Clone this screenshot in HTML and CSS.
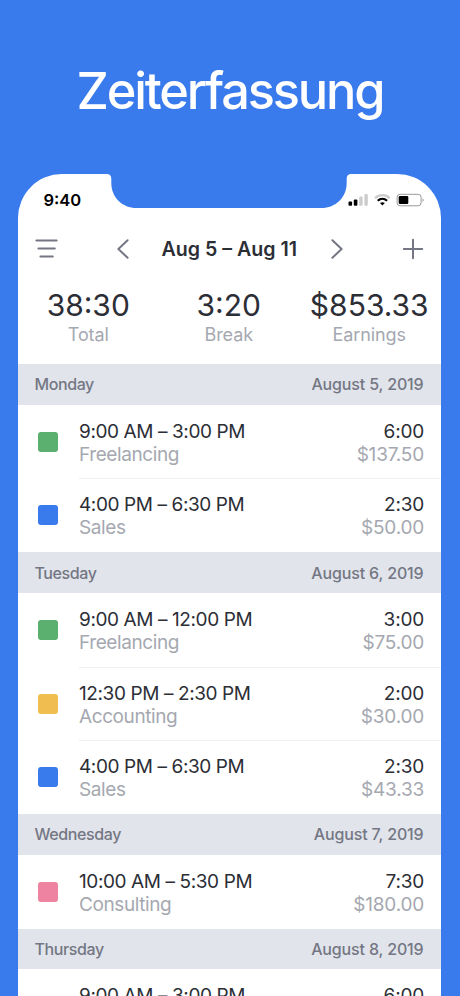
FILE: index.html
```html
<!DOCTYPE html>
<html lang="de">
<head>
  <meta charset="UTF-8">
  <meta name="viewport" content="width=device-width, initial-scale=1.0">
  <title>Zeiterfassung</title>
  <link rel="stylesheet" href="styles.css">
</head>
<body>
  <h1 class="headline">Zeiterfassung</h1>

  <div class="phone">
    <svg class="notch" width="260" height="35" viewBox="0 0 260 35">
      <path d="M7 0C11 0 12.3 1.6 12.3 5V9C12.3 23.5 23.5 34 37.5 34H222.5C236.5 34 247.7 23.5 247.7 9V5C247.7 1.6 249 0 253 0V-2H7Z" />
    </svg>

    <!-- Status bar -->
    <div class="status-bar">
      <span class="clock">9:40</span>
      <svg class="status-icons" width="78" height="16" viewBox="0 0 78 16">
        <rect x="1.5" y="9.5" width="3.6" height="4.3" rx="1" />
        <rect x="6.8" y="7.4" width="3.6" height="6.4" rx="1" />
        <rect class="dim" x="12.2" y="4.5" width="3.4" height="9.3" rx="1" />
        <rect class="dim" x="17.4" y="2" width="3.4" height="11.8" rx="1" />
        <path class="arc dim-arc" d="M28.1 6.1C32.2 2.1 38.6 2.1 42.7 6.1" />
        <path class="arc" d="M30.7 8.8C33.4 6.3 37.4 6.3 40.1 8.8" />
        <path d="M33 11.1C34.5 9.9 36.3 9.9 37.8 11.1L35.4 13.6Z" />
        <rect class="outline" x="50.1" y="2.3" width="24" height="11.5" rx="3" />
        <path class="cap" d="M75.5 6.2C77 6.8 77 9.5 75.5 10.1Z" />
        <rect x="51.7" y="4" width="9.6" height="8.1" rx="1.3" />
      </svg>
    </div>

    <!-- Week navigation -->
    <div class="toolbar">
      <svg class="icon" width="24" height="22" viewBox="0 0 24 22">
        <path d="M1.4 2.4H21.6M3.4 10.5H19.8M5.4 18.5H17.8" />
      </svg>
      <svg class="icon" width="14" height="22" viewBox="0 0 14 22">
        <path d="M11.6 2.2L2.4 11L11.6 19.8" />
      </svg>
      <h2 class="week">Aug 5 – Aug 11</h2>
      <svg class="icon" width="14" height="22" viewBox="0 0 14 22">
        <path d="M2.4 2.2L11.6 11L2.4 19.8" />
      </svg>
      <svg class="icon" width="22" height="22" viewBox="0 0 22 22">
        <path d="M11 1.8V20.2M1.8 11H20.2" />
      </svg>
    </div>

    <!-- Totals -->
    <div class="summary">
      <div class="stat">
        <div class="value">38:30</div>
        <div class="label">Total</div>
      </div>
      <div class="stat">
        <div class="value">3:20</div>
        <div class="label">Break</div>
      </div>
      <div class="stat">
        <div class="value">$853.33</div>
        <div class="label">Earnings</div>
      </div>
    </div>

    <!-- Entries by day -->
    <div class="day"><span>Monday</span><span class="date">August 5, 2019</span></div>
    <div class="entry">
      <span class="swatch green"></span>
      <div class="details">
        <div><div class="time">9:00 AM – 3:00 PM</div><div class="project">Freelancing</div></div>
        <div class="amounts"><div class="hours">6:00</div><div class="money">$137.50</div></div>
      </div>
    </div>
    <div class="entry">
      <span class="swatch blue"></span>
      <div class="details">
        <div><div class="time">4:00 PM – 6:30 PM</div><div class="project">Sales</div></div>
        <div class="amounts"><div class="hours">2:30</div><div class="money">$50.00</div></div>
      </div>
    </div>

    <div class="day"><span>Tuesday</span><span class="date">August 6, 2019</span></div>
    <div class="entry">
      <span class="swatch green"></span>
      <div class="details">
        <div><div class="time">9:00 AM – 12:00 PM</div><div class="project">Freelancing</div></div>
        <div class="amounts"><div class="hours">3:00</div><div class="money">$75.00</div></div>
      </div>
    </div>
    <div class="entry">
      <span class="swatch yellow"></span>
      <div class="details">
        <div><div class="time">12:30 PM – 2:30 PM</div><div class="project">Accounting</div></div>
        <div class="amounts"><div class="hours">2:00</div><div class="money">$30.00</div></div>
      </div>
    </div>
    <div class="entry">
      <span class="swatch blue"></span>
      <div class="details">
        <div><div class="time">4:00 PM – 6:30 PM</div><div class="project">Sales</div></div>
        <div class="amounts"><div class="hours">2:30</div><div class="money">$43.33</div></div>
      </div>
    </div>

    <div class="day"><span>Wednesday</span><span class="date">August 7, 2019</span></div>
    <div class="entry">
      <span class="swatch pink"></span>
      <div class="details">
        <div><div class="time">10:00 AM – 5:30 PM</div><div class="project">Consulting</div></div>
        <div class="amounts"><div class="hours">7:30</div><div class="money">$180.00</div></div>
      </div>
    </div>

    <div class="day"><span>Thursday</span><span class="date">August 8, 2019</span></div>
    <div class="entry">
      <span class="swatch green"></span>
      <div class="details">
        <div><div class="time">9:00 AM – 3:00 PM</div></div>
        <div class="amounts"><div class="hours">6:00</div></div>
      </div>
    </div>
  </div>
</body>
</html>
```

FILE: styles.css
```css
* {
  box-sizing: border-box;
}

body {
  margin: 0;
  height: 996px;
  overflow: hidden;
  background: #397bed;
  font-family: Inter, "Liberation Sans", sans-serif;
  color: #2c2e36;
}

.headline {
  height: 174px;
  margin: 0;
  padding-top: 60px;
  line-height: 62px;
  font-size: 50.5px;
  font-weight: 500;
  letter-spacing: -2.15px;
  text-align: center;
  color: #fff;
}

.phone {
  position: relative;
  width: 422.5px;
  height: 822px;
  margin-left: 18px;
  overflow: hidden;
  background: #fff;
  border-radius: 44px 44px 0 0;
}

.notch {
  position: absolute;
  top: 0;
  left: 81.25px;
  fill: #397bed;
}

.status-bar {
  display: flex;
  justify-content: space-between;
  align-items: center;
  height: 52px;
  padding: 0 15.5px 0 25.5px;
}

.clock {
  font-size: 16.5px;
  font-weight: 600;
  color: #000;
}

.status-icons .dim {
  fill: #ccc;
}

.status-icons .arc {
  fill: none;
  stroke: #000;
  stroke-width: 2.2;
}

.status-icons .dim-arc {
  stroke: #ccc;
}

.status-icons .outline {
  fill: none;
  stroke: #999;
}

.status-icons .cap {
  fill: #999;
}

.toolbar {
  display: grid;
  grid-template-columns: 81px 46px 168.5px 72px 30px;
  align-items: center;
  height: 46px;
  padding-left: 16.5px;
}

.icon {
  fill: none;
  stroke: #747783;
  stroke-width: 2;
  stroke-linecap: round;
  stroke-linejoin: round;
}

.week {
  margin: 0;
  font-size: 19.6px;
  font-weight: 600;
  white-space: nowrap;
}

.summary {
  display: grid;
  grid-template-columns: repeat(3, 1fr);
  height: 92px;
  padding: 14px 1px 0 0;
  text-align: center;
}

.value {
  line-height: 38px;
  font-size: 30px;
  white-space: nowrap;
}

.label {
  line-height: 22px;
  font-size: 18px;
  letter-spacing: -0.1px;
  color: #a5a8b0;
}

.day {
  display: flex;
  justify-content: space-between;
  align-items: center;
  height: 40.8px;
  padding: 0 17px 0 16.5px;
  background: #e1e4eb;
  font-size: 16px;
  font-weight: 500;
  letter-spacing: -0.4px;
  color: #747783;
}

.date {
  letter-spacing: -0.15px;
}

.entry {
  display: flex;
  align-items: center;
  height: 73.7px;
  padding-left: 20px;
}

.swatch {
  width: 20px;
  height: 20px;
  margin-right: 21px;
  border-radius: 3px;
}

.green { background: #5bb070; }
.blue { background: #397bed; }
.yellow { background: #f0bd50; }
.pink { background: #ee83a1; }

.details {
  flex: 1;
  display: flex;
  justify-content: space-between;
  height: 100%;
  padding: 15px 16.5px 0 0;
  white-space: nowrap;
}

.entry + .entry .details {
  border-top: 1px solid #eeeff2;
  padding-top: 14px;
}

.time,
.hours {
  line-height: 23px;
  font-size: 19px;
  letter-spacing: -0.4px;
}

.project,
.money {
  line-height: 23px;
  font-size: 19px;
  letter-spacing: -0.4px;
  color: #a5a8b0;
}

.amounts .hours,
.amounts .money {
  letter-spacing: -0.2px;
}

.amounts {
  text-align: right;
}
```
